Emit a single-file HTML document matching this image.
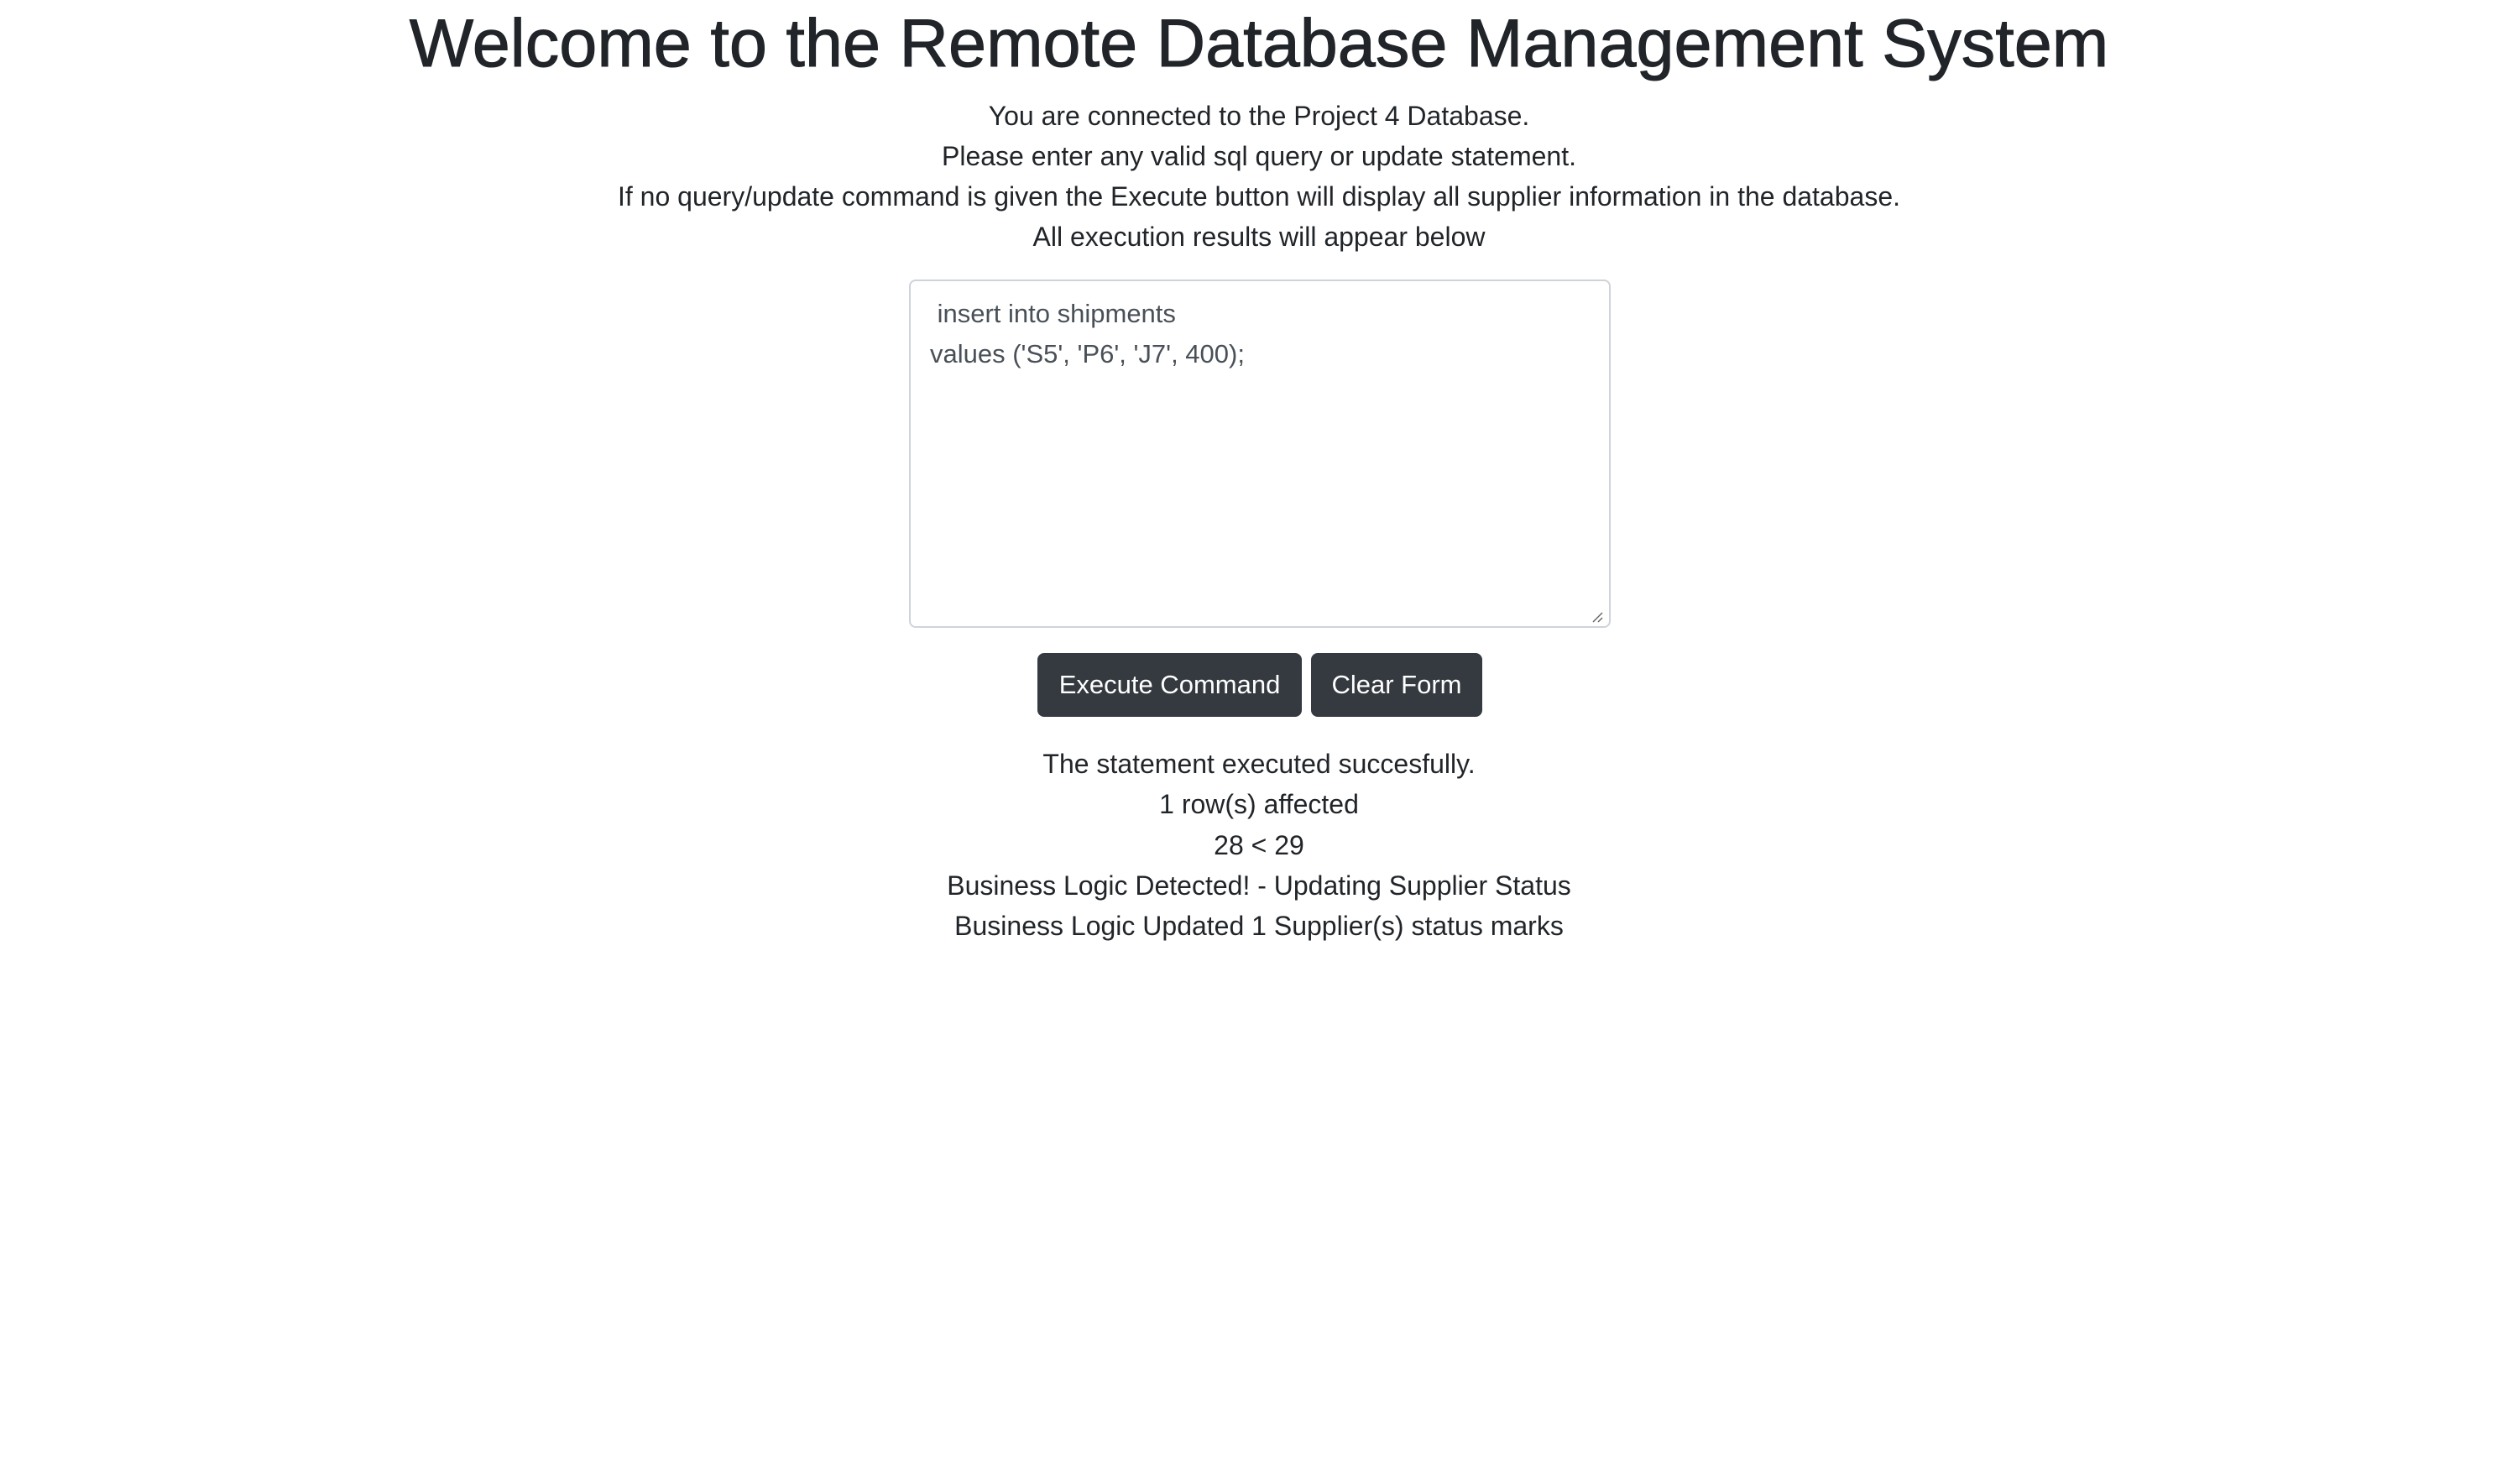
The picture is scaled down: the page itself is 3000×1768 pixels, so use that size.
<!DOCTYPE html>
<html><head><meta charset="utf-8"><style>
html,body{margin:0;padding:0;background:#fff;width:3000px;height:1768px;overflow:hidden}
body{font-family:"Liberation Sans",sans-serif;color:#212529;position:relative}
.c{position:absolute;left:0;width:3000px;text-align:center;white-space:nowrap}
h1{margin:0;font-size:81px;font-weight:normal;line-height:92px;top:6px;-webkit-text-stroke:1px #212529}
.p{font-size:32px;line-height:48px}
.ta{position:absolute;left:1083px;top:333px;width:832px;height:411px;border:2px solid #ced4da;border-radius:8px;box-sizing:content-box}
.tl{position:absolute;font-size:31px;color:#495057;white-space:pre}
.btn{position:absolute;top:778px;height:76px;background:#343a40;color:#fff;border-radius:8px;font-size:31px;line-height:76px;text-align:center}
</style></head><body>
<h1 class="c">Welcome to the Remote Database Management System</h1>
<div class="c p" style="top:114px">You are connected to the Project 4 Database.</div>
<div class="c p" style="top:162px">Please enter any valid sql query or update statement.</div>
<div class="c p" style="top:210px">If no query/update command is given the Execute button will display all supplier information in the database.</div>
<div class="c p" style="top:258px">All execution results will appear below</div>
<div class="ta"></div>
<div class="tl" style="left:1108px;top:356px"> insert into shipments</div>
<div class="tl" style="left:1108px;top:404px">values ('S5', 'P6', 'J7', 400);</div>
<svg style="position:absolute;left:1895px;top:727px" width="16" height="16"><path d="M3 14 L14 3 M9 14 L14 9" stroke="#666" stroke-width="1.5"/></svg>
<div class="btn" style="left:1236px;width:315px">Execute Command</div>
<div class="btn" style="left:1562px;width:204px">Clear Form</div>
<div class="c p" style="top:886px">The statement executed succesfully.</div>
<div class="c p" style="top:934px">1 row(s) affected</div>
<div class="c p" style="top:983px">28 &lt; 29</div>
<div class="c p" style="top:1031px">Business Logic Detected! - Updating Supplier Status</div>
<div class="c p" style="top:1079px">Business Logic Updated 1 Supplier(s) status marks</div>
</body></html>
